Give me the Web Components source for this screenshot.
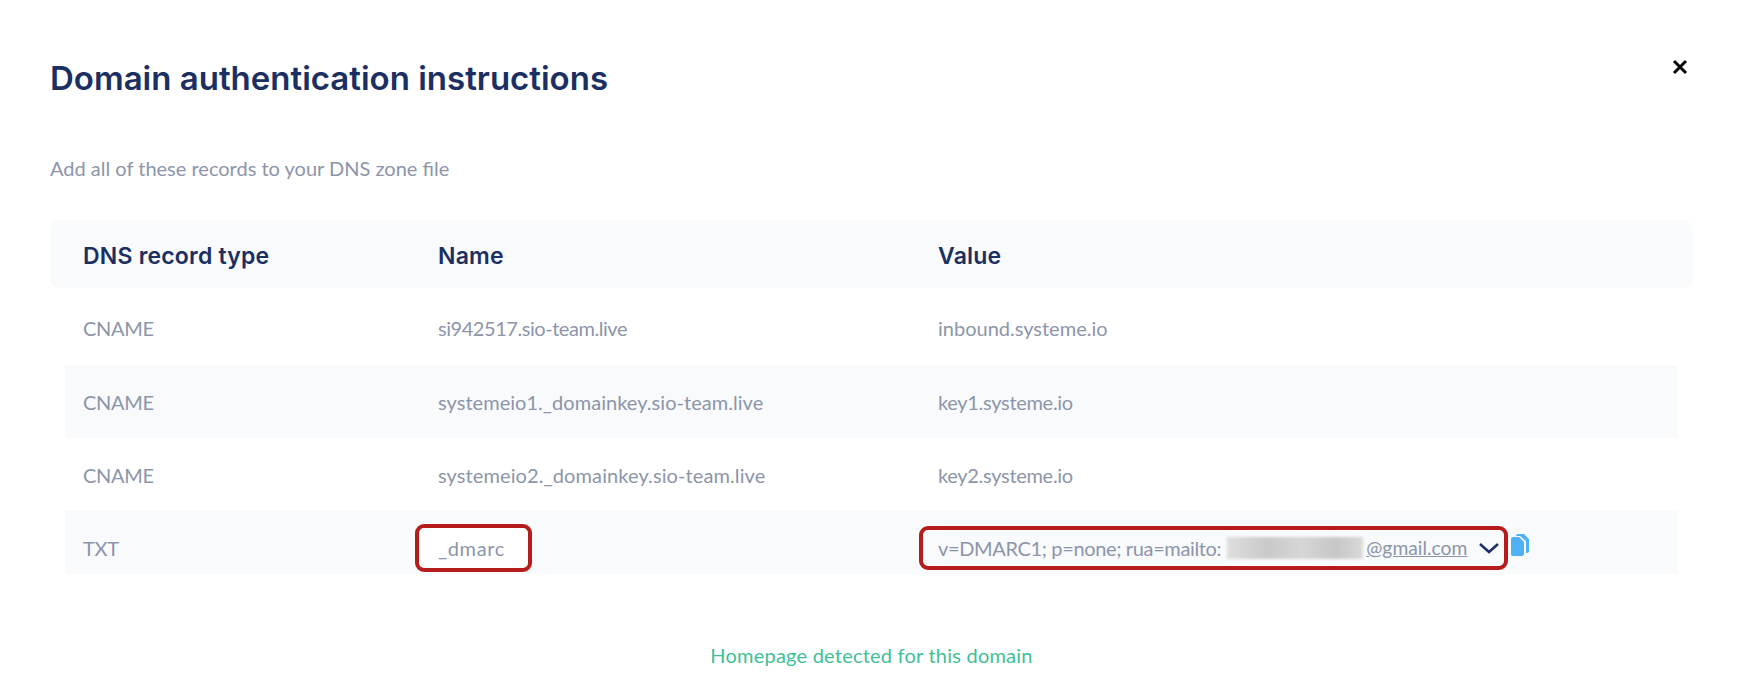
<!DOCTYPE html>
<html>
<head>
<meta charset="utf-8">
<title>Domain authentication instructions</title>
<style>
  html, body { margin: 0; background: #fff; }
  body { font-family: "Lato", "Liberation Sans", sans-serif; }
</style>
</head>
<body>
<dns-modal heading="Domain authentication instructions" hint="Add all of these records to your DNS zone file" status="Homepage detected for this domain">
  <dns-row head>
    <span>DNS record type</span>
    <span>Name</span>
    <span>Value</span>
  </dns-row>
  <dns-row first>
    <span style="letter-spacing:-.3px">CNAME</span>
    <span style="letter-spacing:-.45px">si942517.sio-team.live</span>
    <span>inbound.systeme.io</span>
  </dns-row>
  <dns-row shaded>
    <span style="letter-spacing:-.3px">CNAME</span>
    <span style="letter-spacing:.04px">systemeio1._domainkey.sio-team.live</span>
    <span style="letter-spacing:-.3px">key1.systeme.io</span>
  </dns-row>
  <dns-row>
    <span style="letter-spacing:-.3px">CNAME</span>
    <span style="letter-spacing:.1px">systemeio2._domainkey.sio-team.live</span>
    <span style="letter-spacing:-.3px">key2.systeme.io</span>
  </dns-row>
  <dns-row shaded last>
    <span style="letter-spacing:-.3px">TXT</span>
    <span><red-mark>_dmarc</red-mark></span>
    <dmarc-value>v=DMARC1; p=none; rua=mailto:</dmarc-value>
  </dns-row>
</dns-modal>

<script>
class DnsModal extends HTMLElement {
    connectedCallback() {
        this.attachShadow({ mode: 'open' });
        this.shadowRoot.innerHTML = `
            <style>
                :host {
                    display: block;
                    height: 699px;
                    box-sizing: border-box;
                    padding: 56px 48px 0 50px;
                    color: #8c95aa;
                }
                header {
                    display: flex;
                    justify-content: space-between;
                    align-items: center;
                    height: 44px;
                }
                h1 {
                    margin: 0;
                    font: 600 33px/44px "Inter", "Liberation Sans", sans-serif;
                    color: #1b2f63;
                }
                .close {
                    width: 18px;
                    height: 18px;
                    margin: -22px 4px 0 0;
                }
                p {
                    margin: 54px 0 0;
                    font-size: 20px;
                    line-height: 28px;
                }
                .table {
                    margin-top: 38px;
                    display: block;
                }
                footer {
                    margin-top: 68px;
                    text-align: center;
                    font-size: 20px;
                    letter-spacing: .22px;
                    line-height: 26px;
                    color: #3fbf95;
                }
            </style>
            <header>
                <h1></h1>
                <svg class="close" viewBox="0 0 18 18"><path d="M3 3 L15 15 M15 3 L3 15" stroke="#0a0a0a" stroke-width="3" fill="none"/></svg>
            </header>
            <p></p>
            <div class="table"><slot></slot></div>
            <footer></footer>
        `;
        this.shadowRoot.querySelector('h1').textContent = this.getAttribute('heading');
        this.shadowRoot.querySelector('p').textContent = this.getAttribute('hint');
        this.shadowRoot.querySelector('footer').textContent = this.getAttribute('status');
    }
}

class DnsRow extends HTMLElement {
    connectedCallback() {
        this.attachShadow({ mode: 'open' });
        this.shadowRoot.innerHTML = `
            <style>
                :host {
                    display: grid;
                    grid-template-columns: 355px 500px 1fr;
                    align-items: center;
                    box-sizing: border-box;
                    height: 73px;
                    margin: 0 15px;
                    padding: 0 18px;
                    font-size: 20px;
                    color: #8c95aa;
                }
                :host([shaded]) {
                    background: #f9fafc;
                }
                :host([head]) {
                    height: 68px;
                    margin: 0;
                    padding: 4px 33px 0;
                    background: #f9fafc;
                    border-radius: 10px;
                    font: 600 23px "Inter", "Liberation Sans", sans-serif;
                    letter-spacing: .2px;
                    color: #1b2f63;
                }
                :host([first]) {
                    height: 77px;
                    padding-top: 2px;
                }
                :host([last]) {
                    height: 63px;
                    padding-top: 10px;
                }
            </style>
            <slot></slot>
        `;
    }
}

class RedMark extends HTMLElement {
    connectedCallback() {
        this.attachShadow({ mode: 'open' });
        this.shadowRoot.innerHTML = `
            <style>
                :host {
                    display: inline-block;
                    box-sizing: border-box;
                    height: 48px;
                    line-height: 40px;
                    margin-left: -23px;
                    padding: 0 19px;
                    width: 117px;
                    border: 4px solid #b71c1c;
                    border-radius: 9px;
                    background: #fff;
                    letter-spacing: .6px;
                }
            </style>
            <slot></slot>
        `;
    }
}

class DmarcValue extends HTMLElement {
    connectedCallback() {
        this.attachShadow({ mode: 'open' });
        this.shadowRoot.innerHTML = `
            <style>
                :host {
                    display: flex;
                    align-items: center;
                }
                .box {
                    display: flex;
                    align-items: center;
                    box-sizing: border-box;
                    width: 589px;
                    height: 44px;
                    margin-left: -19px;
                    padding: 0 4px 0 15px;
                    border: 4px solid #b71c1c;
                    border-radius: 9px;
                    white-space: nowrap;
                }
                .text {
                    letter-spacing: -.36px;
                }
                .blur {
                    display: inline-block;
                    width: 136px;
                    height: 22px;
                    margin-left: 6px;
                    background: linear-gradient(90deg, #dedede, #c9c9c9 30%, #d6d6d6 55%, #c6c6c6 80%, #dadada);
                    filter: blur(1.5px);
                    flex: none;
                }
                .domain {
                    margin-left: 3px;
                    font-size: 19.3px;
                    text-decoration: underline;
                }
                .chev {
                    width: 22px;
                    height: 14px;
                    margin-left: auto;
                }
                .copy {
                    width: 20px;
                    height: 24px;
                    margin: -6px 0 0 2px;
                }
            </style>
            <div class="box">
                <span class="text"><slot></slot></span>
                <span class="blur"></span>
                <span class="domain">@gmail.com</span>
                <svg class="chev" viewBox="0 0 22 14"><path d="M2 3 L11 11 L20 3" stroke="#1b2f63" stroke-width="2.5" fill="none"/></svg>
            </div>
            <svg class="copy" viewBox="0 0 20 24">
                <path d="M8 1 H14 L19 6 V18 Q19 20 17 20 H16 V8 L10 3 H6 Q6 1 8 1 Z" fill="#4fb0f5"/>
                <path d="M3 4 H9 L14 9 V21 Q14 23 12 23 H3 Q1 23 1 21 V6 Q1 4 3 4 Z" fill="#4fb0f5"/>
            </svg>
        `;
    }
}

customElements.define('dns-modal', DnsModal);
customElements.define('dns-row', DnsRow);
customElements.define('red-mark', RedMark);
customElements.define('dmarc-value', DmarcValue);
</script>
</body>
</html>
